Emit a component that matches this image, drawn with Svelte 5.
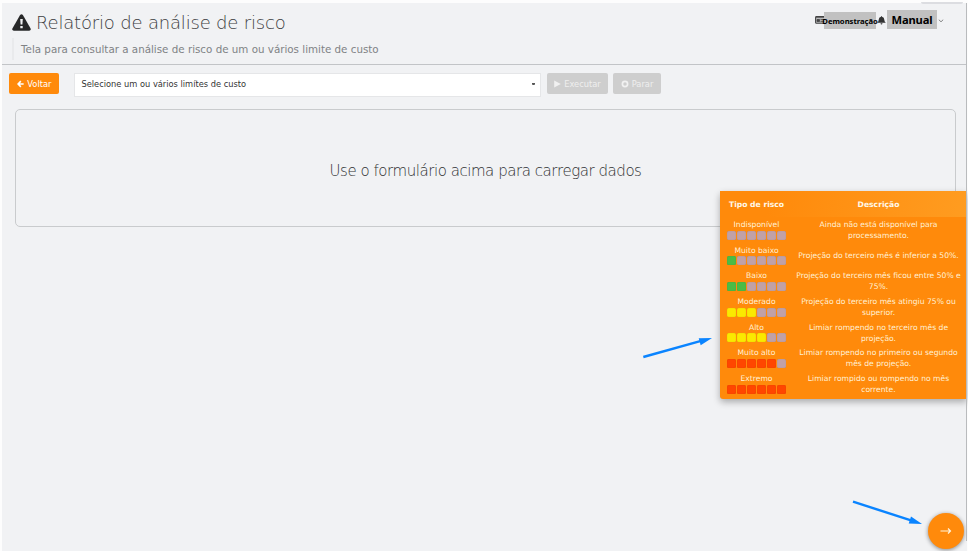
<script>
  const risks = [
    { name: 'Indisponível', level: 0, color: '', lines: ['Ainda não está disponível para', 'processamento.'] },
    { name: 'Muito baixo', level: 1, color: '#4bbb45', lines: ['Projeção do terceiro mês é inferior a 50%.'] },
    { name: 'Baixo', level: 2, color: '#4bbb45', lines: ['Projeção do terceiro mês ficou entre 50% e', '75%.'] },
    { name: 'Moderado', level: 3, color: '#fbe900', lines: ['Projeção do terceiro mês atingiu 75% ou', 'superior.'] },
    { name: 'Alto', level: 4, color: '#fbe900', lines: ['Limiar rompendo no terceiro mês de', 'projeção.'] },
    { name: 'Muito alto', level: 5, color: '#ff4600', lines: ['Limiar rompendo no primeiro ou segundo', 'mês de projeção.'] },
    { name: 'Extremo', level: 6, color: '#ff4600', lines: ['Limiar rompido ou rompendo no mês', 'corrente.'] }
  ];
  const cells = [0, 1, 2, 3, 4, 5];
</script>

<div class="frame">
  <main class="page">
    <header>
      <div class="heading">
        <h1>
          <svg width="19" height="17" viewBox="0 0 19 17"><path d="M8.1.9Q9.5-.6 10.9.9L18.6 14.6Q19 16.7 17.2 16.8H1.8Q0 16.7.4 14.6Z" fill="#272829" /><path d="M8.2 5h2.6l-.4 5.6H8.6zM8.3 12h2.4v2.3H8.3z" fill="#f1f2f4" /></svg>
          <span>Relatório de análise de risco</span>
        </h1>
        <p class="subtitle">Tela para consultar a análise de risco de um ou vários limite de custo</p>
      </div>
      <div class="account">
        <svg class="card" width="10" height="8" viewBox="0 0 10 8"><rect x=".6" y=".6" width="9" height="6.6" rx=".8" fill="#b9babb" stroke="#444" stroke-width="1.1" /><path d="M1 1.2h8M2 3.5h2.5v2H2zM5.5 3.6H9M5.5 5.4H9" stroke="#444" fill="#444" stroke-width=".8" /></svg>
        <span class="demo"><b>Demonstração</b></span>
        <svg class="bell" width="9" height="9" viewBox="0 0 9 9"><path d="M4 .2h1v.6Q7.300 1.300 7.300 3.800q0 2 1.500 3H.2Q1.700 5.800 1.700 3.800 1.700 1.300 4 .8zM3.500 7.300h2q-.2 1.200-1 1.200t-1-1.200z" fill="#333" /></svg>
        <span class="manual">Manual</span>
        <svg class="chevron" width="6" height="4" viewBox="0 0 6 4"><path d="M.8.7 3 2.800 5.200.7" fill="none" stroke="#777" stroke-width=".9" /></svg>
      </div>
    </header>

    <section class="toolbar">
      <button class="back">
        <svg width="7" height="8" viewBox="0 0 8 8"><path d="M4.400.7 1.200 4l3.200 3.300M1.300 4h6.300" fill="none" stroke="#fff" stroke-width="1.800" /></svg>
        <span>Voltar</span>
      </button>
      <div class="select"><span>Selecione um ou vários limítes de custo</span><i></i></div>
      <button class="disabled run">
        <svg width="7" height="8" viewBox="0 0 7 8"><path d="M.2.4 6.800 4 .2 7.600z" fill="#f1f1f1" /></svg>
        <span>Executar</span>
      </button>
      <button class="disabled stop">
        <svg width="8" height="8" viewBox="0 0 8 8"><circle cx="4" cy="4" r="2.600" fill="none" stroke="#f1f1f1" stroke-width="1.700" /></svg>
        <span>Parar</span>
      </button>
    </section>

    <section class="empty"><span>Use o formulário acima para carregar dados</span></section>
  </main>

  <aside class="legend">
    <div class="row head"><b>Tipo de risco</b><b class="hd">Descrição</b></div>
    {#each risks as risk}
      <div class="row">
        <div class="type">
          <span>{risk.name}</span>
          <div class="meter">
            {#each cells as cell}
              <i style:background={cell < risk.level ? risk.color : '#c1a1a6'}></i>
            {/each}
          </div>
        </div>
        <div class="desc">
          {#each risk.lines as line}<span>{line}</span>{/each}
        </div>
      </div>
    {/each}
  </aside>

  <button class="fab" aria-label="Avançar">
    <svg width="12" height="8" viewBox="0 0 12 8"><path d="M.5 4h10M8 1.500l2.500 2.500L8 6.500" fill="none" stroke="#fff3dc" stroke-width="1.200" /></svg>
  </button>

  <svg class="pointers" width="968" height="551" viewBox="0 0 968 551">
    <g stroke="#0a84ff" stroke-width="2.400" fill="#0a84ff">
      <path d="M643.300 357 702 340.700" /><path d="M712 338 698.700 338.200 700.700 345.300z" stroke="none" />
      <path d="M853 501.700 911 520.300" /><path d="M922 524 911 516.500 908.700 523.500z" stroke="none" />
    </g>
  </svg>
  <div class="scroll"></div>
  <div class="tab"></div>
</div>

<style>
  :global(body) { margin: 0; background: #fff; overflow: hidden; }
  * { box-sizing: border-box; }
  .frame { position: relative; width: 968px; height: 551px; padding: 3px 1px 0 2px; overflow: hidden; background: #fdfdfd; font-family: "DejaVu Sans", sans-serif; }
  .page { height: 548px; background: #f1f2f4; }
  svg { display: block; flex: none; }
  span, b { white-space: nowrap; }
  header { height: 62px; display: flex; justify-content: space-between; border-bottom: 1px solid #c2c4c7; }
  .heading { padding: 7px 0 0 10px; }
  h1 { margin: 0; height: 24px; display: flex; align-items: center; gap: 5px; font-weight: 200; font-size: 18px; line-height: 24px; color: #3c3d3f; }
  h1 span { letter-spacing: -.18px; padding-top: 1px; }
  .subtitle { margin: 4px 0 0 0; height: 22px; padding-left: 7px; border-left: 2px solid #e9eaec; font-size: 10.320px; line-height: 22px; color: #808285; white-space: nowrap; }
  .account { display: flex; align-items: flex-start; padding: 7px 23px 0 0; color: #000; }
  .card { margin-top: 6px; }
  .demo { width: 52px; height: 17px; margin: 2px 0 0 -1px; background: #c1c1c1; font: 7.700px/19px "Noto Sans", sans-serif; letter-spacing: -.05px; position: relative; display: flex; justify-content: center; }
  .bell { margin: 6px 1px 0; position: relative; }
  .manual { width: 50px; height: 19px; background: #c1c1c1; text-align: center; font: bold 11.200px/19px "Noto Sans", sans-serif; letter-spacing: -.15px; }
  .chevron { margin: 9px 0 0 1px; }

  .toolbar { height: 44px; padding: 8px 0 0 7px; display: flex; align-items: flex-start; }
  button { border: 0; margin: 0; padding: 0; font-family: "DejaVu Sans", sans-serif; }
  .toolbar button { height: 21px; border-radius: 2px; display: flex; align-items: center; justify-content: center; gap: 3px; font: 8.300px/21px "DejaVu Sans", sans-serif; color: #fff; }
  .toolbar button span { padding-top: 1px; }
  .back { width: 50px; margin-left: .400px !important; background: #ff8a0b; }
  .toolbar .disabled { background: #cecece; color: #efefef; }
  .run { width: 61px; margin-left: 6px !important; }
  .stop { width: 48px; margin-left: 5px !important; }
  .select { width: 467px; height: 24px; margin-left: 14.600px; padding: 0 5px 0 6.500px; border: 1px solid #e5e6e8; background: #fff; display: flex; align-items: center; justify-content: space-between; font-size: 8.280px; line-height: 21px; color: #333; }
  .select span { margin-top: -2px; }
  .select i { width: 3px; height: 2px; margin-top: -2px; background: #555; border-radius: 0 0 1px 1px; }
  .empty { width: 941px; height: 118px; margin-left: 13px; border: 1px solid #c9cbcd; border-radius: 5px; display: flex; justify-content: center; padding-top: 5px; align-items: center; font-size: 15px; letter-spacing: -.45px; font-weight: 200; color: #303133; }

  .legend { position: absolute; left: 720px; top: 191px; width: 247px; height: 208px; background: #ff8a0b; border-radius: 3px 0 0 3px; box-shadow: 0 3px 7px rgba(0,0,0,.3); color: #fff1d6; font-size: 7.640px; }
  .row { display: flex; height: 25.700px; }
  .head { height: 26px; margin-bottom: 1px; line-height: 28px; background: linear-gradient(100deg, #ff8a0b 20%, #ff9c20); color: #fff8e8; }
  .head b:first-child { width: 73px; text-align: center; }
  .hd { width: 171px; text-align: center; }
  .type { width: 73px; text-align: center; line-height: 10.500px; padding-top: 2px; }
  .type span { display: block; height: 10.700px; }
  .meter { display: flex; gap: 1px; padding-left: 7px; }
  .meter i { width: 9px; height: 9px; border-radius: 1.500px; box-shadow: inset 0 0 1px rgba(80,50,0,.3); }
  .desc { width: 171px; height: 24px; display: flex; flex-direction: column; justify-content: center; align-items: center; line-height: 11px; }
  .fab { position: absolute; left: 928px; top: 513px; width: 36px; height: 36px; border-radius: 50%; background: #ff8a0b; box-shadow: 0 1px 4px rgba(0,0,0,.45); display: flex; align-items: center; justify-content: center; }
  .pointers { position: absolute; left: 0; top: 0; pointer-events: none; }
  .scroll { position: absolute; right: 1px; top: 3px; width: 1px; height: 538px; background: #b9bbbd; }
  .tab { position: absolute; left: 921px; top: 2px; width: 42px; height: 2px; background: #dcdde1; border-radius: 0 0 3px 3px; }
</style>
